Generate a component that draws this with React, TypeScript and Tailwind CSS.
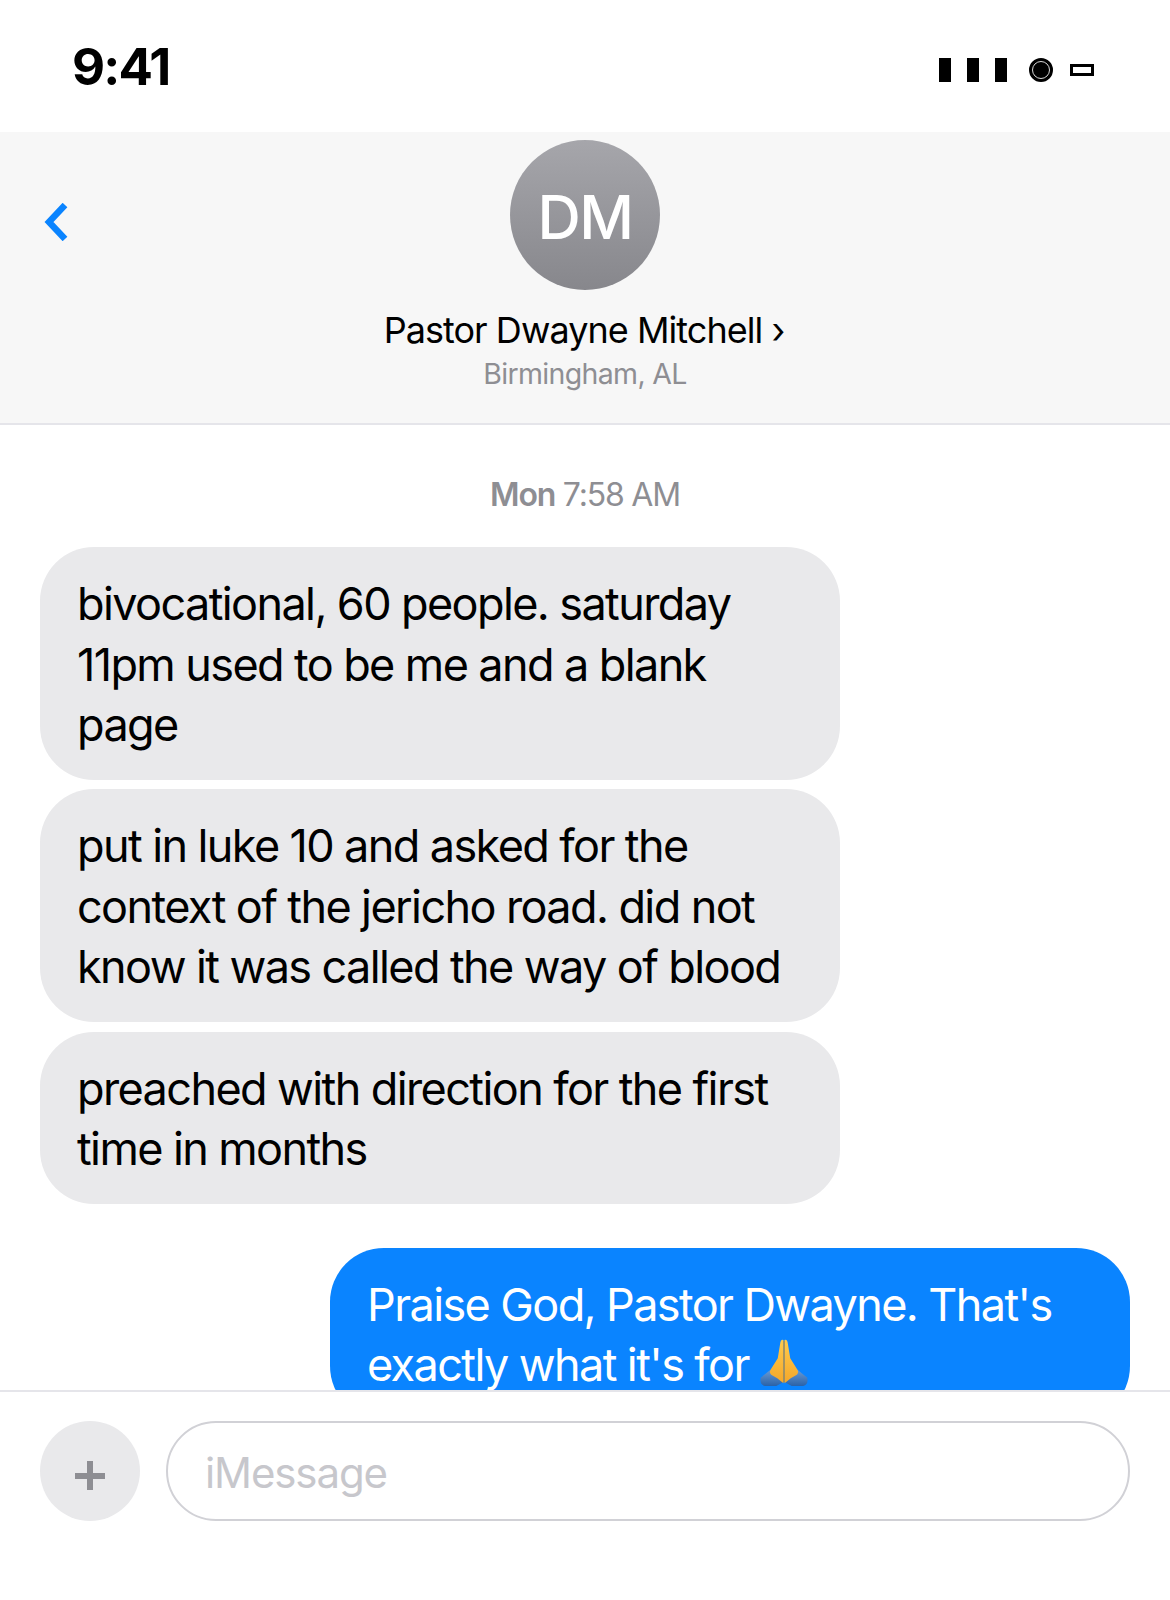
import React from 'react'

const PrayingHands = () => (
  <svg width="48" height="50" viewBox="0 0 50 50" className="inline-block align-[-7px]">
    <defs>
      <linearGradient id="palm" x1="0" y1="0" x2="0" y2="1">
        <stop offset="0" stopColor="#ffcb4c" />
        <stop offset="1" stopColor="#f4a72a" />
      </linearGradient>
      <linearGradient id="sleeve" x1="0" y1="0" x2="0" y2="1">
        <stop offset="0" stopColor="#6b9bd4" />
        <stop offset="1" stopColor="#2a62a8" />
      </linearGradient>
    </defs>
    <path d="M11 32 L1 40 Q-1 47 5 49 L17 49 L24 45 L18 34 Z" fill="url(#sleeve)" />
    <path d="M39 32 L49 40 Q51 47 45 49 L33 49 L26 45 L32 34 Z" fill="url(#sleeve)" />
    <path d="M24.4 1 Q21.5 0 21 5 L18.5 20 L11 32 Q9 36 13 38 L18 41 L24.4 46 Z" fill="url(#palm)" />
    <path d="M25.6 1 Q28.5 0 29 5 L31.5 20 L39 32 Q41 36 37 38 L32 41 L25.6 46 Z" fill="url(#palm)" />
    <path d="M25 2 L25 45" stroke="#d98a13" strokeWidth="1" />
  </svg>
)

const StatusBar = () => (
  <div className="h-[132px] flex items-center justify-between pl-[72px] pr-[76px] bg-white">
    <span className="text-[51px] font-bold text-black tracking-[-1.8px] leading-none mt-[1px]">9:41</span>
    <div className="flex items-center mt-[7px]">
      <div className="w-[12px] h-[24px] bg-black" />
      <div className="w-[12px] h-[24px] bg-black ml-[16px]" />
      <div className="w-[12px] h-[24px] bg-black ml-[16px]" />
      <div className="w-[24px] h-[24px] ml-[22px] rounded-full bg-black border-[3px] border-black flex items-center justify-center">
        <div className="w-[18px] h-[18px] rounded-full bg-black border border-[#d8d8d8]" />
      </div>
      <div className="w-[24px] h-[12px] ml-[17px] border-[3px] border-black bg-white" />
    </div>
  </div>
)

const Header = () => (
  <div className="relative h-[293px] bg-[#f7f7f7] border-b-2 border-[#e5e5ea] flex flex-col items-center pt-[8px]">
    {/* back chevron */}
    <svg width="26" height="38" viewBox="0 0 26 38" className="absolute left-[43px] top-[71px]">
      <path d="M22 2 L6 19 L22 36" fill="none" stroke="#0a84ff" strokeWidth="6.5" />
    </svg>
    <div className="w-[150px] h-[150px] rounded-full bg-gradient-to-b from-[#a6a6ab] to-[#87878c] flex items-center justify-center">
      <span className="text-[60px] font-[550] text-white tracking-[-1.6px] mt-[3px]">DM</span>
    </div>
    <div className="mt-[15px] text-[36px] leading-[50px] text-black tracking-[-0.95px] mr-[2px]">Pastor Dwayne Mitchell ›</div>
    <div className="text-[28.5px] leading-[38px] text-[#8e8e93] tracking-[-0.65px]">Birmingham, AL</div>
  </div>
)

const Bubble = ({ children, blue = false }: { children: React.ReactNode; blue?: boolean }) => (
  <div
    className={`w-[800px] shrink-0 rounded-[54px] pl-[37px] pr-[39px] pt-[27px] pb-[24px] text-[45px] leading-[60.6px] tracking-[-1.6px] ${
      blue ? 'bg-[#0a84ff] text-white self-end' : 'bg-[#e9e9eb] text-black self-start'
    }`}
  >
    {children}
  </div>
)

const Messages = () => (
  <div className="flex-1 overflow-hidden flex flex-col px-[40px]">
    <div className="text-center text-[32px] leading-[40px] text-[#8e8e93] tracking-[-1.2px] mt-[50px] mb-[32px]">
      <span className="font-semibold">Mon</span> 7:58 AM
    </div>
    <div className="flex flex-col gap-[9.5px]">
      <Bubble>bivocational, 60 people. saturday 11pm used to be me and a blank page</Bubble>
      <Bubble>put in luke 10 and asked for the context of the jericho road. did not know it was called the way of blood</Bubble>
      <Bubble>preached with direction for the first time in months</Bubble>
    </div>
    <div className="flex flex-col mt-[44px]">
      <Bubble blue>
        Praise God, Pastor Dwayne. That's exactly what it's for <PrayingHands />
      </Bubble>
    </div>
  </div>
)

const Composer = () => (
  <div className="h-[210px] shrink-0 bg-white border-t-2 border-[#e5e5ea] pt-[29px] px-[40px] flex items-start gap-[26px]">
    <div className="w-[100px] h-[100px] shrink-0 rounded-full bg-[#e9e9eb] flex items-center justify-center">
      <svg width="30" height="30" viewBox="0 0 30 30" className="mt-[10px]">
        <path d="M15 0 V29 M0 15 H30" stroke="#8e8e93" strokeWidth="6" />
      </svg>
    </div>
    <div className="flex-1 h-[100px] rounded-full border-2 border-[#d1d1d6] flex items-center pl-[37px]">
      <span className="text-[42px] text-[#c7c7cc] tracking-[-1.1px] mt-[2px]">iMessage</span>
    </div>
  </div>
)

export default function App() {
  return (
    <div className="w-[1170px] h-[1600px] bg-white flex flex-col overflow-hidden font-['Inter','Liberation_Sans',sans-serif]">
      <StatusBar />
      <Header />
      <Messages />
      <Composer />
    </div>
  )
}
